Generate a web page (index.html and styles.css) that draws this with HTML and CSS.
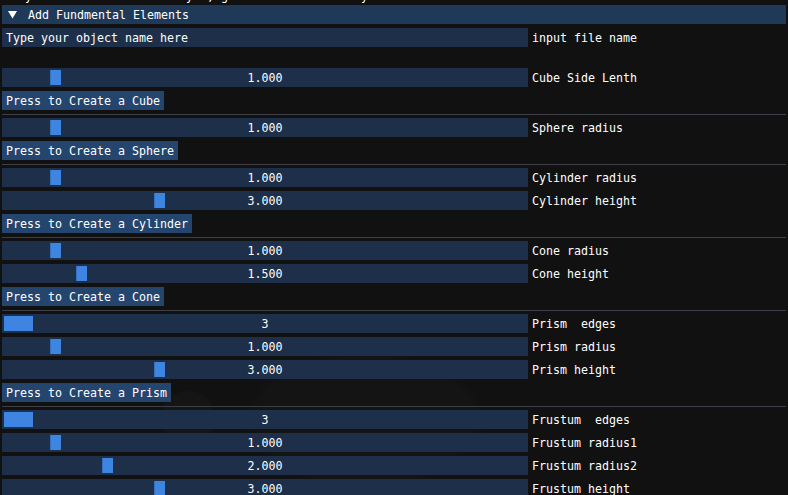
FILE: index.html
```html
<!DOCTYPE html>
<html>
<head>
<meta charset="utf-8">
<link rel="stylesheet" href="styles.css">
</head>
<body>
<div class="win">
  <div class="topline"><span class="toptext">   y                      y  , g                   y</span></div>
  <div class="header"><span class="arrow"><svg width="9" height="8" viewBox="0 0 9 8"><polygon points="0,0 9,0 4.5,7.5" fill="#ffffff"/></svg></span><span class="htext">Add Fundmental Elements</span></div>

  <div class="row"><div class="frame input"><span class="itext">Type your object name here</span></div><span class="label">input file name</span></div>
  <div class="blank"></div>

  <div class="row"><div class="frame slider"><div class="grab" style="left:48px"></div><span class="val">1.000</span></div><span class="label">Cube Side Lenth</span></div>
  <div class="row"><div class="btn">Press to Create a Cube</div></div>
  <div class="sep"></div>

  <div class="row"><div class="frame slider"><div class="grab" style="left:48px"></div><span class="val">1.000</span></div><span class="label">Sphere radius</span></div>
  <div class="row"><div class="btn">Press to Create a Sphere</div></div>
  <div class="sep"></div>

  <div class="row"><div class="frame slider"><div class="grab" style="left:48px"></div><span class="val">1.000</span></div><span class="label">Cylinder radius</span></div>
  <div class="row"><div class="frame slider"><div class="grab" style="left:152px"></div><span class="val">3.000</span></div><span class="label">Cylinder height</span></div>
  <div class="row"><div class="btn">Press to Create a Cylinder</div></div>
  <div class="sep"></div>

  <div class="row"><div class="frame slider"><div class="grab" style="left:48px"></div><span class="val">1.000</span></div><span class="label">Cone radius</span></div>
  <div class="row"><div class="frame slider"><div class="grab" style="left:74px"></div><span class="val">1.500</span></div><span class="label">Cone height</span></div>
  <div class="row"><div class="btn">Press to Create a Cone</div></div>
  <div class="sep"></div>

  <div class="row"><div class="frame slider"><div class="grab wide" style="left:2px"></div><span class="val">3</span></div><span class="label">Prism  edges</span></div>
  <div class="row"><div class="frame slider"><div class="grab" style="left:48px"></div><span class="val">1.000</span></div><span class="label">Prism radius</span></div>
  <div class="row"><div class="frame slider"><div class="grab" style="left:152px"></div><span class="val">3.000</span></div><span class="label">Prism height</span></div>
  <div class="row"><div class="btn">Press to Create a Prism</div></div>
  <div class="sep"></div>

  <div class="row"><div class="frame slider"><div class="grab wide" style="left:2px"></div><span class="val">3</span></div><span class="label">Frustum  edges</span></div>
  <div class="row"><div class="frame slider"><div class="grab" style="left:48px"></div><span class="val">1.000</span></div><span class="label">Frustum radius1</span></div>
  <div class="row"><div class="frame slider"><div class="grab" style="left:100px"></div><span class="val">2.000</span></div><span class="label">Frustum radius2</span></div>
  <div class="row"><div class="frame slider"><div class="grab" style="left:152px"></div><span class="val">3.000</span></div><span class="label">Frustum height</span></div>
</div>
</body>
</html>
```
FILE: styles.css
```css
html, body {
  margin: 0;
  padding: 0;
  overflow: hidden;
  height: 495px;
}
html {
  background: #111111;
}
body {
  font-family: "DejaVu Sans Mono", "Liberation Mono", monospace;
  font-size: 11.63px;
  color: #ffffff;
  background:
    radial-gradient(circle at 188px 418px, #151515 0, #151515 26px, rgba(17,17,17,0) 28px),
    radial-gradient(ellipse 120px 70px at 365px 420px, #141414 0, #141414 90%, rgba(17,17,17,0) 100%),
    #111111;
}
.win {
  padding-left: 2px;
  width: 784px;
}
.topline {
  height: 5px;
  overflow: hidden;
}
.toptext {
  display: block;
  white-space: pre;
  line-height: 13px;
  margin-top: -10px;
  padding-left: 2px;
}
.header {
  height: 19px;
  background: #1f3a59;
  display: flex;
  align-items: center;
  margin-bottom: 4px;
}
.arrow {
  width: 26px;
  padding-left: 6px;
  box-sizing: border-box;
  display: flex;
  align-items: center;
  height: 19px;
}
.arrow svg {
  display: block;
  margin-top: 1px;
}
.htext {
  white-space: pre;
}
.row {
  display: flex;
  align-items: center;
  height: 19px;
  margin-bottom: 4px;
}
.frame {
  width: 526px;
  height: 19px;
  background: #1e2f49;
  position: relative;
  display: flex;
  align-items: center;
  flex: none;
}
.input .itext {
  padding-left: 4px;
  white-space: pre;
}
.slider {
  justify-content: center;
}
.val {
  position: relative;
  white-space: pre;
}
.grab {
  position: absolute;
  top: 2px;
  width: 11px;
  height: 15px;
  background: #3d85e0;
  box-shadow: inset 1px 0 0 #3571bd;
}
.grab.wide {
  width: 29px;
  box-shadow: none;
}
.label {
  margin-left: 4px;
  white-space: pre;
}
.blank {
  height: 13px;
  margin-bottom: 4px;
}
.btn {
  background: #24456d;
  height: 19px;
  padding: 0 4px;
  white-space: pre;
  display: flex;
  align-items: center;
}
.sep {
  height: 1px;
  background: #3e3e47;
  margin: 0 0 3px 0;
}
```
